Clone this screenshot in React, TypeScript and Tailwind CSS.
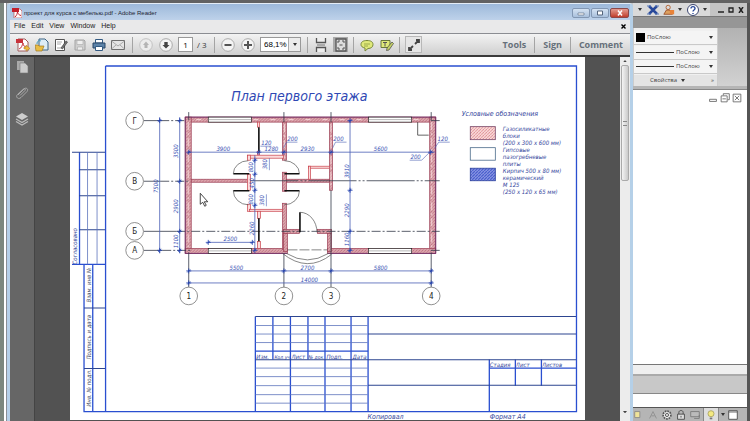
import type { ReactNode } from 'react';

const BLUE = '#2a4fd0';
const DIM = '#4a5fb4';
const WALL = '#9c3f55';
const AXIS = '#333a48';

type Box = [number, number, number, number];

const WALLS: Box[] = [
  [185, 117, 250, 5],
  [185, 117, 6, 136],
  [429, 117, 6, 136],
  [185, 248, 102, 5],
  [327, 248, 108, 5],
  [282, 122, 4, 38],
  [282, 172, 4, 19],
  [282, 203, 4, 46],
  [329, 122, 3, 68],
  [191, 179, 57, 3],
  [286, 179, 43, 3],
  [283, 229, 16, 4],
  [317, 229, 14, 4],
  [283, 233, 4, 18],
  [327, 233, 4, 18],
];

const THIN_WALLS: Box[] = [
  [257, 122, 2, 5],
  [257, 151, 2, 4],
  [247, 155, 36, 3],
  [247, 155, 3, 5],
  [247, 174, 3, 16],
  [247, 204, 3, 7],
  [249, 209, 33, 2],
  [257, 211, 3, 7],
  [257, 241, 3, 7],
  [308, 166, 21, 2],
  [308, 166, 2, 13],
];

const WINDOWS: Box[] = [
  [208, 117, 43, 5],
  [368, 117, 43, 5],
  [208, 248, 43, 5],
  [368, 248, 43, 5],
];

const H_DIMS: Box[] = [
  [188, 152, 434, 152],
  [208, 242, 252, 242],
  [188, 270.5, 432, 270.5],
  [188, 282.5, 432, 282.5],
];

const V_DIMS: Box[] = [
  [159.5, 117, 159.5, 253],
  [179.5, 117, 179.5, 253],
  [254.5, 155, 254.5, 250],
  [349.5, 120, 349.5, 252],
];

const TICKS: [number, number][] = [
  [188.5, 152], [258.5, 152], [283.5, 152], [330.5, 152], [430, 152],
  [208, 242], [252, 242],
  [188.5, 270.5], [283.5, 270.5], [330.5, 270.5], [430.5, 270.5],
  [188.5, 282.5], [430.5, 282.5],
  [159.5, 120.5], [159.5, 250], [179.5, 120.5], [179.5, 181], [179.5, 231], [179.5, 250],
  [254.5, 160], [254.5, 174], [254.5, 190], [254.5, 205], [254.5, 250],
  [349.5, 120.5], [349.5, 190], [349.5, 231], [349.5, 250],
];

const H_LABELS: [string, number, number][] = [
  ['3900', 223, 151], ['120', 266, 145], ['1280', 271, 151], ['200', 292, 141],
  ['2930', 307, 151], ['200', 338, 141], ['5600', 380, 151], ['120', 442, 141],
  ['200', 415, 159], ['2500', 230, 241], ['5500', 236, 270], ['2700', 307, 270],
  ['5800', 380, 270], ['14000', 309, 282],
];

const V_LABELS: [string, number, number][] = [
  ['3500', 178, 151], ['7500', 158, 186], ['2900', 178, 206], ['1100', 178, 241],
  ['800', 253, 167], ['450', 254, 183], ['800', 253, 199], ['380', 267, 164],
  ['380', 264, 200], ['2260', 254, 228], ['3910', 348, 171], ['2290', 348, 210],
  ['1160', 348, 239],
];

const AXES: [string, number, number][] = [
  ['Г', 134.5, 120.5], ['В', 134.5, 181], ['Б', 134.5, 231], ['А', 134.5, 250],
  ['1', 188.5, 295.5], ['2', 283.5, 295.5], ['3', 330.5, 295.5], ['4', 430.5, 295.5],
];

const LEGEND = [
  'Газосиликатные', 'блоки', '(200 х 300 х 600 мм)', 'Гипсовые', 'пазогребневые',
  'плиты', 'Кирпич 500 х 80 мм)', 'керамический', 'М 125', '(250 х 120 х 65 мм)',
];

function Rects({ items, fill, stroke }: { items: Box[]; fill: string; stroke: string }) {
  return (
    <g fill={fill} stroke={stroke} strokeWidth="0.7">
      {items.map(([x, y, w, h], i) => (
        <rect key={i} x={x} y={y} width={w} height={h} />
      ))}
    </g>
  );
}

function FloorPlan() {
  return (
    <g fill="none">
      <Rects items={WALLS} fill="url(#wall)" stroke={WALL} />
      <path d="M185 117H435V253H327M185 117V253H287" stroke="#70306a" strokeWidth="0.9" />
      <Rects items={THIN_WALLS} fill="#fbdcdc" stroke="#c9424c" />
      <Rects items={WINDOWS} fill="#ffffff" stroke="#222222" />
      <path d="M208 119.5h43M368 119.5h43M208 250.5h43M368 250.5h43" stroke="#888" strokeWidth="0.6" />

      <g stroke={AXIS} strokeWidth="0.8">
        <path d="M143.500 120.500H160M143.500 181H160M143.500 231H176M143.500 250H162" />
        <path d="M160 120.500H186M160 181H190M176 231H439M162 250H190" strokeDasharray="9 2 2 2" />
        <path d="M430 120.500H439M430 250H439" />
        <path d="M196 119.500h10M253 119.500h28M288 119.500h78M413 119.500H428" stroke="#fbe4e4" strokeDasharray="5 12" />
        <path d="M250 180.500H439" strokeDasharray="48 2 2 2 2 2" />
        <path d="M188.500 112v8M283.500 112v10M330.500 112v10M430.500 112v8" />
        <path d="M188.500 252v35M283.500 253v34M330.500 190v97M430.500 252v35" />
        <path d="M188 122v126M431 122v126M284 124v34M330.500 124v64" stroke="#fbe4e4" strokeDasharray="8 3 2 3" />
      </g>

      <g stroke="#111111" strokeWidth="1.6">
        <path d="M258.500 127v24M258.500 218v23" />
        <path d="M233 173.500h16M233 190.500h16M284 173.500h15M284 190.500h15M299.500 212v20" />
      </g>
      <g stroke="#555555" strokeWidth="0.7">
        <path d="M233 173.500A15 13 0 0 1 248 160.500M233 190.500A15 14 0 0 0 248 204.500" />
        <path d="M299 173.500A15 13 0 0 0 284 160.500M299 190.500A15 14 0 0 1 284 204.500" />
        <path d="M299.500 212A17 20 0 0 1 316.500 232" />
        <path d="M282 253Q307 273 331 254M286 253Q307 266 328 253" />
        <path d="M417 122v13h11" stroke="#222222" />
        <path d="M287 249.500h40" strokeDasharray="10 2" />
      </g>

      <g stroke={DIM} strokeWidth="0.8">
        {[...H_DIMS, ...V_DIMS].map(([x1, y1, x2, y2], i) => (
          <line key={i} x1={x1} y1={y1} x2={x2} y2={y2} />
        ))}
        <path d="M260 146h11M286 142l-3 6M286 142h11M332 148l3-6h11M434 148l4-6h11M409 160h12l8-8" strokeWidth="0.6" />
        <path d="M269 158v12M266 194v12" strokeWidth="0.6" />
        {TICKS.map(([x, y], i) => (
          <path key={i} d={`M${x - 1.5} ${y + 1.5}l3-3M${x - 2.5} ${y}h5M${x} ${y - 2.5}v5`} stroke="#1f3fae" />
        ))}
      </g>

      <g fill="#3a52b4" fontSize="6" fontStyle="italic" textAnchor="middle">
        {H_LABELS.map(([t, x, y], i) => (
          <text key={i} x={x} y={y}>{t}</text>
        ))}
        {V_LABELS.map(([t, x, y], i) => (
          <text key={i} transform={`translate(${x} ${y}) rotate(-90)`}>{t}</text>
        ))}
      </g>

      {AXES.map(([t, x, y]) => (
        <g key={t}>
          <circle cx={x} cy={y} r="8.8" fill="#fff" stroke="#777" strokeWidth="0.8" />
          <text x={x} y={y + 3} fontSize="8" fill="#222" textAnchor="middle">{t}</text>
        </g>
      ))}
      <path d="M200 193v11l2.500-2 2 4 1.500-1-2-3.500h3.500z" fill="#fff" stroke="#333" strokeWidth="0.9" />
    </g>
  );
}

function Legend() {
  return (
    <g fontStyle="italic" fill="#33459c" fontSize="6">
      <text x="461" y="116" fontSize="7">Условные обозначения</text>
      <rect x="469.5" y="126.500" width="25" height="13" fill="url(#pink)" stroke="#7a4a6a" strokeWidth="0.8" />
      <rect x="469.5" y="147.500" width="25" height="12.500" fill="#fff" stroke="#4a6a8a" strokeWidth="0.8" />
      <rect x="469.5" y="168" width="25" height="12.500" fill="url(#brick)" stroke="#2a3f9c" strokeWidth="0.8" />
      {LEGEND.map((t, i) => (
        <text key={t} x="502" y={131 + i * 7}>{t}</text>
      ))}
    </g>
  );
}

function TitleBlock() {
  return (
    <g fill="none">
      <g stroke={BLUE} strokeWidth="1.3">
        <path d="M105.500 66H575.500V411H84V264M105.500 66V411" />
        <path d="M79.500 152V264M72 264h33.500M92.700 264V411" />
        <path d="M255 316V411M290 316V411M324.500 316V411M350.500 316V411M367.500 316V411M272.500 316V359M307.500 316V359" />
        <path d="M255 350.500H367.500M488.500 359V411M514.500 359V385M540.500 359V385M488.500 367.500H575" />
      </g>
      <g stroke="#2d4590" strokeWidth="1">
        <path d="M72 152h33M79 169.500h26M79 195.500h26M79 229.500h26M84 307.500h21M84 368h21" />
        <path d="M255 316H575M367.500 333.500H575M255 359.200H575M367.500 384.700H575" />
      </g>
      <g stroke="#5f76bd" strokeWidth="0.8">
        <path d="M87.500 152V264M97 152V264" />
        <path d="M255 325H367M255 333.500H367M255 342H367M255 367.500H367M255 376H367M255 385H367M255 394H367M255 402.500H367" />
      </g>
      <g fill="#34479a" fontSize="6" fontStyle="italic">
        <text x="256" y="358">Изм.</text>
        <text x="274" y="358" fontSize="5">Кол.уч.</text>
        <text x="291" y="358">Лист</text>
        <text x="308" y="358" fontSize="5">№ док.</text>
        <text x="326" y="358">Подп.</text>
        <text x="352" y="358">Дата</text>
        <text x="489" y="366">Стадия</text>
        <text x="515" y="366">Лист</text>
        <text x="541" y="366">Листов</text>
        <text x="367" y="418" fontSize="7">Копировал</text>
        <text x="489" y="418" fontSize="7">Формат А4</text>
        <text transform="translate(77 264) rotate(-90)">Согласовано</text>
        <text transform="translate(91 302) rotate(-90)" fill="#444a66">Взам. инв №</text>
        <text transform="translate(91 359) rotate(-90)" fill="#444a66">Подпись и дата</text>
        <text transform="translate(91 406) rotate(-90)" fill="#444a66">Инв. № подл.</text>
      </g>
    </g>
  );
}

function Sheet() {
  return (
    <svg
      viewBox="70 57 514 362"
      className="block w-full bg-white font-['Liberation_Sans_Narrow','DejaVu_Sans_Condensed','Liberation_Sans',sans-serif]"
      role="img"
      aria-label="План первого этажа"
    >
      <defs>
        <pattern id="wall" width="3" height="3" patternUnits="userSpaceOnUse">
          <rect width="3" height="3" fill="#e0aab2" />
          <path d="M0 3L3 0" stroke="#bc7480" strokeWidth="0.8" />
        </pattern>
        <pattern id="pink" width="3" height="3" patternUnits="userSpaceOnUse">
          <rect width="3" height="3" fill="#fbdcdc" />
          <path d="M0 3L3 0" stroke="#dd8a8e" strokeWidth="0.8" />
        </pattern>
        <pattern id="brick" width="3" height="3" patternUnits="userSpaceOnUse">
          <rect width="3" height="3" fill="#8f9be4" />
          <path d="M0 3L3 0" stroke="#3a50c8" strokeWidth="1" />
        </pattern>
      </defs>
      <text x="231" y="101" fontSize="14" fontStyle="italic" fill="#2f48b4">План первого этажа</text>
      <TitleBlock />
      <FloorPlan />
      <Legend />
    </svg>
  );
}

function Tool({ label, children }: { label: string; children: ReactNode }) {
  return (
    <button type="button" aria-label={label} className="flex size-[15px] shrink-0 items-center justify-center">
      <svg viewBox="0 0 14 14" className="size-[14px]" fill="none">{children}</svg>
    </button>
  );
}

function SmallTool({ label, children }: { label: string; children: ReactNode }) {
  return (
    <button type="button" aria-label={label} className="flex size-3 shrink-0 items-center justify-center">
      <svg viewBox="0 0 14 14" className="size-3" fill="none">{children}</svg>
    </button>
  );
}

function Divider() {
  return <span className="h-4 w-px shrink-0 bg-[#a4a4a4]" />;
}

function Toolbar() {
  return (
    <div className="flex h-[22px] shrink-0 items-center border-t border-[#8b8d92] bg-linear-to-b from-[#f3f3f3] to-[#cfcfcf] pl-[5px]">
      <div className="flex items-center gap-1">
        <Tool label="Create PDF">
          <path d="M2 1h7l3 3v9H2z" fill="#fff" stroke="#a05a5a" />
          <path d="M0 1h7v4H0z" fill="#c8323a" />
          <path d="M3 11c3-1 3-4 4-6 0 3 2 4 4 4" stroke="#c8323a" />
          <path d="M8 9h2V7l4 3.500L10 13v-2H8z" fill="#eebb3c" stroke="#a87820" strokeWidth=".5" />
        </Tool>
        <Tool label="Open">
          <path d="M4 1h6l3 3v8H4z" fill="#dcecf6" stroke="#3c6484" />
          <path d="M0 7h3l1 1h5l-2 5H1z" fill="#e9bd45" stroke="#a07a20" strokeWidth=".7" />
          <path d="M2 6c0-3 2-4 4-3" stroke="#3c9ac0" />
        </Tool>
        <Tool label="Sign document">
          <path d="M1.500 1.500h9v11h-9z" fill="#fff" stroke="#555" />
          <path d="M3 4h5M3 6h4M3 10h4" stroke="#aaa" />
          <path d="M7 10l5-7 1.500 1L8.500 11z" fill="#777" stroke="#333" strokeWidth=".6" />
        </Tool>
        <Tool label="Save">
          <path d="M2 2h9l1 1v9H2z" fill="#cfcfcf" stroke="#a4a4a4" />
          <path d="M4 2.500h6v4H4zM4.500 9h5v3h-5z" fill="#eee" stroke="#aaa" strokeWidth=".6" />
        </Tool>
        <Tool label="Print">
          <path d="M3.500 1.500h7V5h-7z" fill="#fff" stroke="#335a82" />
          <path d="M1 5h12v5H1z" fill="#5d83a8" stroke="#2b4766" />
          <path d="M3.500 8.500h7v4h-7z" fill="#fff" stroke="#335a82" />
        </Tool>
        <Tool label="E-mail">
          <path d="M.5 2.500h13v9H.5z" fill="#e5e5e5" stroke="#707070" />
          <path d="M.5 3L7 8l6.500-5M.5 11L5 7M13.500 11L9 7" stroke="#9a9a9a" strokeWidth=".8" />
        </Tool>
      </div>
      <div className="ml-[7px] flex items-center gap-[5px]">
        <Divider />
        <Tool label="Previous page">
          <circle cx="7" cy="7" r="6.300" fill="#ececec" stroke="#c2c2c2" />
          <path d="M7 3.500L10 7H8.500v3h-3V7H4z" fill="#b4b4b4" />
        </Tool>
        <Tool label="Next page">
          <circle cx="7" cy="7" r="6.300" fill="#f4f4f4" stroke="#aaa" />
          <path d="M7 10.500L10.500 7H8.700V4H5.300v3H3.500z" fill="#444" />
        </Tool>
        <label className="flex items-center gap-1 text-[8px] text-[#333]">
          <input
            aria-label="Page"
            defaultValue="1"
            className="h-[15px] w-[15px] border border-[#999] bg-white text-center text-[8px] text-black"
          />
          <span className="w-3 whitespace-nowrap">/ 3</span>
        </label>
        <Divider />
        <Tool label="Zoom out">
          <circle cx="7" cy="7" r="6.300" fill="#f4f4f4" stroke="#aaa" />
          <path d="M3.500 7h7" stroke="#555" strokeWidth="2" />
        </Tool>
        <Tool label="Zoom in">
          <circle cx="7" cy="7" r="6.300" fill="#f4f4f4" stroke="#aaa" />
          <path d="M3 7h8M7 3v8" stroke="#555" strokeWidth="2" />
        </Tool>
        <div className="relative flex h-[15px] w-[41px] items-center border border-[#999] bg-white">
          <select aria-label="Zoom" className="h-full w-full appearance-none pl-[3px] font-['Liberation_Sans',sans-serif] text-[8px] leading-3 text-black">
            <option>68,1%</option>
          </select>
          <span className="pointer-events-none absolute inset-y-0 right-0 flex w-3 items-center justify-center border-l border-[#aaa] bg-[#ececec]">
            <svg viewBox="0 0 4 3" className="w-1"><path d="M0 0h4L2 3z" fill="#333" /></svg>
          </span>
        </div>
      </div>
      <div className="ml-[6px] flex items-center gap-[5px]">
        <Divider />
        <Tool label="Fit width">
          <path d="M2.500 0v4.500h9V0M2.500 14V9.500h9V14" fill="#eee" stroke="#555" strokeWidth="1.300" />
          <path d="M3 7h8" stroke="#777" />
        </Tool>
        <span className="flex bg-[#aaa]">
          <Tool label="Fit page">
            <path d="M2 1h10v12H2z" fill="#ddd" stroke="#555" strokeWidth="1.300" />
            <path d="M4 5V3h2M10 5V3H8M4 9v2h2M10 9v2H8M5.500 7h3" stroke="#555" />
          </Tool>
        </span>
        <Divider />
        <Tool label="Add note">
          <path d="M7 2.500c4 0 6 1.500 6 4s-2 4-5 4L5 13v-3C2.500 9.500 1 8.500 1 6.500c0-2.500 2-4 6-4z" fill="#dfe97a" stroke="#78883a" />
          <path d="M4 6h6M4 8h4" stroke="#8a9a40" strokeWidth=".8" />
        </Tool>
        <Tool label="Highlight">
          <path d="M1 2.500h9v7H1z" fill="#dfe97a" stroke="#68783a" />
          <path d="M3 4.500h4M5 4.500v4" stroke="#555" />
          <path d="M7 10l5-6 1.500 1.500L9 12l-2.500.5z" fill="#c5d266" stroke="#444" strokeWidth=".7" />
        </Tool>
        <Divider />
        <span className="flex border border-[#b8b8b8] bg-[#e6e6e6]">
          <Tool label="Read mode">
            <path d="M8 6l4-4M9 2h3v3M6 8l-4 4M2 9v3h3" stroke="#444" strokeWidth="1.800" />
          </Tool>
        </span>
      </div>
      <div className="ml-auto flex items-center gap-2 pr-[7px] text-[9px] font-bold text-[#66707a]">
        <button type="button">Tools</button>
        <Divider />
        <button type="button">Sign</button>
        <Divider />
        <button type="button">Comment</button>
      </div>
    </div>
  );
}

function WindowButton({ label, close, children }: { label: string; close?: boolean; children: ReactNode }) {
  return (
    <button
      type="button"
      aria-label={label}
      className={
        close
          ? 'flex h-[10px] w-[19px] items-center justify-center rounded-xs border border-[#8c4848] bg-linear-to-b from-[#e29a90] to-[#c03c2c]'
          : 'flex h-[10px] w-[18px] items-center justify-center rounded-xs border border-[#8297b3] bg-linear-to-b from-[#d4e2f2] to-[#a9c0dc]'
      }
    >
      <svg viewBox="0 0 8 6" className="h-[6px] w-2" fill="none">{children}</svg>
    </button>
  );
}

function Reader() {
  return (
    <main className="flex min-w-0 flex-1 flex-col rounded-t-[4px] border-x-[3px] border-t border-x-[#b5d0e8] border-t-[#e4edf6] bg-[#f0f0f0]">
      <header className="flex h-4 shrink-0 items-center bg-linear-to-b from-[#9db9da] to-[#bed2ea] pt-[2px] pr-px">
        <svg viewBox="0 0 10 10" className="ml-[2px] size-[10px]" aria-hidden="true">
          <path d="M2 1h6l2 2v7H2z" fill="#fff" stroke="#b33" strokeWidth=".6" />
          <path d="M0 0h7v4H0z" fill="#c21f2c" />
          <path d="M3 9c2-2 2-3 2.500-5C6 6 7 7 9 7.500" fill="none" stroke="#c21f2c" />
        </svg>
        <h1 className="ml-[2px] font-['Liberation_Sans',sans-serif] text-[6px] whitespace-nowrap text-[#1d2633]">проект для курса с мебелью.pdf - Adobe Reader</h1>
        <div className="ml-auto flex gap-px">
          <WindowButton label="Minimize"><path d="M1 3h6v2H1z" fill="#fff" stroke="#54657c" strokeWidth=".6" /></WindowButton>
          <WindowButton label="Maximize"><path d="M1.500 1h5v4h-5z" fill="#fff" stroke="#54657c" /></WindowButton>
          <WindowButton label="Close" close><path d="M2 .5l4 5M6 .5l-4 5" stroke="#fff" strokeWidth="1.500" /></WindowButton>
        </div>
      </header>
      <nav className="flex h-[13px] shrink-0 items-center gap-[6px] bg-[#e9e9ea] pr-1 pl-1 font-['Liberation_Sans',sans-serif] text-[7px] text-[#222]">
        <button type="button">File</button>
        <button type="button">Edit</button>
        <button type="button">View</button>
        <button type="button">Window</button>
        <button type="button">Help</button>
        <button type="button" aria-label="Close document" className="ml-auto">
          <svg viewBox="0 0 5 5" className="size-[5px]"><path d="M.5.5l4 4M4.500.5l-4 4" stroke="#000" strokeWidth="1.400" /></svg>
        </button>
      </nav>
      <Toolbar />
      <div className="flex flex-1 border-t-2 border-[#3a3a3a] bg-[#525252]">
        <aside className="flex w-[25px] shrink-0 flex-col items-center gap-[11px] border-r border-[#444] bg-[#666] pt-[2px]">
          <Tool label="Pages">
            <path d="M2 1h7v9H2z" fill="#aaa" />
            <path d="M5 3h5l3 3v7H5z" fill="#ccc" stroke="#777" strokeWidth=".6" />
          </Tool>
          <Tool label="Attachments">
            <path d="M3 9l6-6c2-2 5 0 3 2.500l-6 6c-2.500 2.500-6-.5-3.500-3l6-5.500c1-1 2.500.5 1.500 1.500L5 9.500" stroke="#aaa" />
          </Tool>
          <Tool label="Layers">
            <path d="M7 1l6 3.500-6 3.500-6-3.500z" fill="#ccc" />
            <path d="M1 7l6 3.500L13 7M1 9.500L7 13l6-3.500" stroke="#bbb" strokeWidth="1.300" />
          </Tool>
        </aside>
        <div className="min-w-0 flex-1 px-[35px]">
          <Sheet />
        </div>
        <div className="flex w-[10px] shrink-0 flex-col items-center bg-[#ececec]">
          <svg viewBox="0 0 5 3" className="my-[3px] w-[4px]" aria-hidden="true"><path d="M0 3h5L2.500 0z" fill="#444" /></svg>
          <div className="flex h-[116px] w-[8px] items-center justify-center rounded-xs border border-[#aaa] bg-linear-to-r from-[#f4f4f4] to-[#cacaca]">
            <span className="h-[5px] w-[4px] border-y border-[#888]" />
          </div>
          <svg viewBox="0 0 5 3" className="mt-auto mb-2 w-[4px]" aria-hidden="true"><path d="M0 0h5L2.500 3z" fill="#444" /></svg>
        </div>
      </div>
    </main>
  );
}

function Arrow() {
  return <svg viewBox="0 0 4 3" className="w-1 shrink-0" aria-hidden="true"><path d="M0 0h4L2 3z" fill="#333" /></svg>;
}

function LayerRow({ label, line }: { label: string; line?: boolean }) {
  return (
    <div className="flex h-[14px] items-center border-b border-[#c9c9c9] bg-[#f4f4f4] pr-1 pl-[2px]">
      {line ? <span className="h-px w-[38px] shrink-0 bg-[#333]" /> : <span className="size-[9px] shrink-0 bg-black" />}
      <select aria-label={label} className="min-w-0 flex-1 appearance-none pl-[2px] text-[6px] text-[#444]">
        <option>ПоСлою</option>
      </select>
      <Arrow />
    </div>
  );
}

function CadWindow() {
  return (
    <aside className="flex w-[117px] shrink-0 flex-col border-r-[3px] border-[#555] bg-white">
      <div className="flex h-[13px] shrink-0 items-center bg-[#dadada]">
        <div className="flex flex-1 items-center gap-[3px] pl-[5px]">
          <Arrow />
          <Tool label="Exchange">
            <path d="M3 3l8 8M11 3l-8 8" stroke="#28489a" strokeWidth="2.500" />
            <path d="M1 3h4M9 11h4M9 3h4M1 11h4" stroke="#5577b5" />
          </Tool>
          <SmallTool label="Connect">
            <circle cx="6" cy="4" r="2.500" stroke="#b05a28" />
            <path d="M1 12l3-5h4l3 5z" fill="#dca060" stroke="#9a5028" />
            <path d="M8 7h5v5H8z" fill="#e88338" />
          </SmallTool>
          <Arrow />
          <Tool label="Help">
            <circle cx="7" cy="7" r="5.500" fill="#fff" stroke="#3c4670" />
            <path d="M5 5.500C5 3 9 3 9 5.500 9 7 7 7 7 8.500M7 10v1" stroke="#2c4a9a" strokeWidth="1.400" />
          </Tool>
          <Arrow />
        </div>
        <div className="flex h-full items-center gap-1 bg-[#c4c4c4] pr-[3px] pl-2 text-[#222]">
          <button type="button" aria-label="Minimize window"><svg viewBox="0 0 6 6" className="size-[6px]"><path d="M0 5h6" stroke="currentColor" strokeWidth="1.500" /></svg></button>
          <button type="button" aria-label="Restore window"><svg viewBox="0 0 6 6" className="size-[6px]" fill="none"><path d="M1 1h4v4H1z" stroke="currentColor" strokeWidth="1.300" /></svg></button>
          <button type="button" aria-label="Close window"><svg viewBox="0 0 6 6" className="size-[6px]"><path d="M1 0l4 6M5 0L1 6" stroke="currentColor" strokeWidth="1.500" /></svg></button>
        </div>
      </div>
      <div className="h-3 shrink-0 border-t border-[#777] bg-[#969696]" />
      <div className="flex h-[58px] shrink-0 bg-[#f0f0f0]">
        <section className="flex flex-1 flex-col justify-between border-x border-[#ccc] pt-[3px]">
          <LayerRow label="Цвет объекта" />
          <LayerRow label="Тип линии" line />
          <LayerRow label="Вес линии" line />
          <div className="flex h-[11px] items-center bg-[#e4e4e4] pr-[3px] pl-4 text-[6px] text-[#444]">
            <button type="button" className="flex items-center gap-1">Свойства <Arrow /></button>
            <span className="ml-auto text-[6px]">»</span>
          </div>
        </section>
        <div className="w-[29px] bg-linear-to-b from-[#b2b2b2] to-[#d2d2d2]" />
      </div>
      <div className="h-1 shrink-0 border-b border-[#888] bg-[#b5b5b5]" />
      <div className="flex flex-1 items-start justify-end pt-[2px] pr-1">
        <SmallTool label="Minimize drawing"><path d="M3 8.500h8v2.500H3z" stroke="#666" /></SmallTool>
        <SmallTool label="Restore drawing"><path d="M5 4V2h7v7h-2M2.500 4.500h7v7h-7zM4 8h4" stroke="#666" /></SmallTool>
        <SmallTool label="Close drawing"><path d="M2.500 2.500h9v9h-9zM4.500 4.500l5 5M9.500 4.500l-5 5" stroke="#666" /></SmallTool>
      </div>
      <div className="h-3 shrink-0 border-t border-b-2 border-t-[#777] border-b-[#aaa] bg-[#efefef]" />
      <div className="h-[18px] shrink-0 border-b border-[#888] bg-[#c8c8c8]" />
      <div className="h-[13px] shrink-0 bg-white" />
      <footer className="flex h-[14px] shrink-0 items-center gap-[2px] border-t border-[#555] bg-[#b5b5b5]">
        <SmallTool label="Annotation scale"><path d="M2 3h6v7H2z" fill="#efe39a" stroke="#888" /></SmallTool>
        <SmallTool label="Annotation visibility"><path d="M3 11l4-8 4 8M5 8h4" stroke="#8d8d8d" /></SmallTool>
        <SmallTool label="Workspace">
          <circle cx="7" cy="7" r="4.500" fill="#eee" stroke="#555" strokeDasharray="2 1" strokeWidth="2" />
          <circle cx="7" cy="7" r="1.800" stroke="#444" />
        </SmallTool>
        <SmallTool label="Lock"><path d="M4.500 6V4c0-3 5-3 5 0v2" stroke="#444" /><path d="M3 6h8v6H3zM7 8v2" fill="#ddd" stroke="#444" /></SmallTool>
        <SmallTool label="Hardware"><path d="M2 3h10v6H2zM6 11h6V7" fill="#bbb" stroke="#777" /></SmallTool>
        <span className="flex h-full items-center border-x border-[#888] bg-[#dedede] px-px">
          <SmallTool label="Isolate objects"><circle cx="7" cy="5.500" r="3.500" fill="#f4e981" stroke="#aaa360" /><path d="M5.500 10h3v2h-3z" fill="#777" /></SmallTool>
        </span>
        <Arrow />
        <SmallTool label="Clean screen"><path d="M2 2h10v10H2z" fill="#fff" stroke="#444" /><path d="M2 3.500h10" stroke="#555" /></SmallTool>
      </footer>
    </aside>
  );
}

export default function App() {
  return (
    <div className="flex min-h-screen flex-col border-t-[3px] border-[#626262] bg-[#c9c9c9] font-['Open_Sans','Noto_Sans',sans-serif]">
      <div className="flex flex-1">
        <div className="w-[7px] shrink-0 border-r border-l-4 border-r-[#8b8f96] border-l-[#7c877e] bg-white" />
        <Reader />
        <CadWindow />
      </div>
    </div>
  );
}
